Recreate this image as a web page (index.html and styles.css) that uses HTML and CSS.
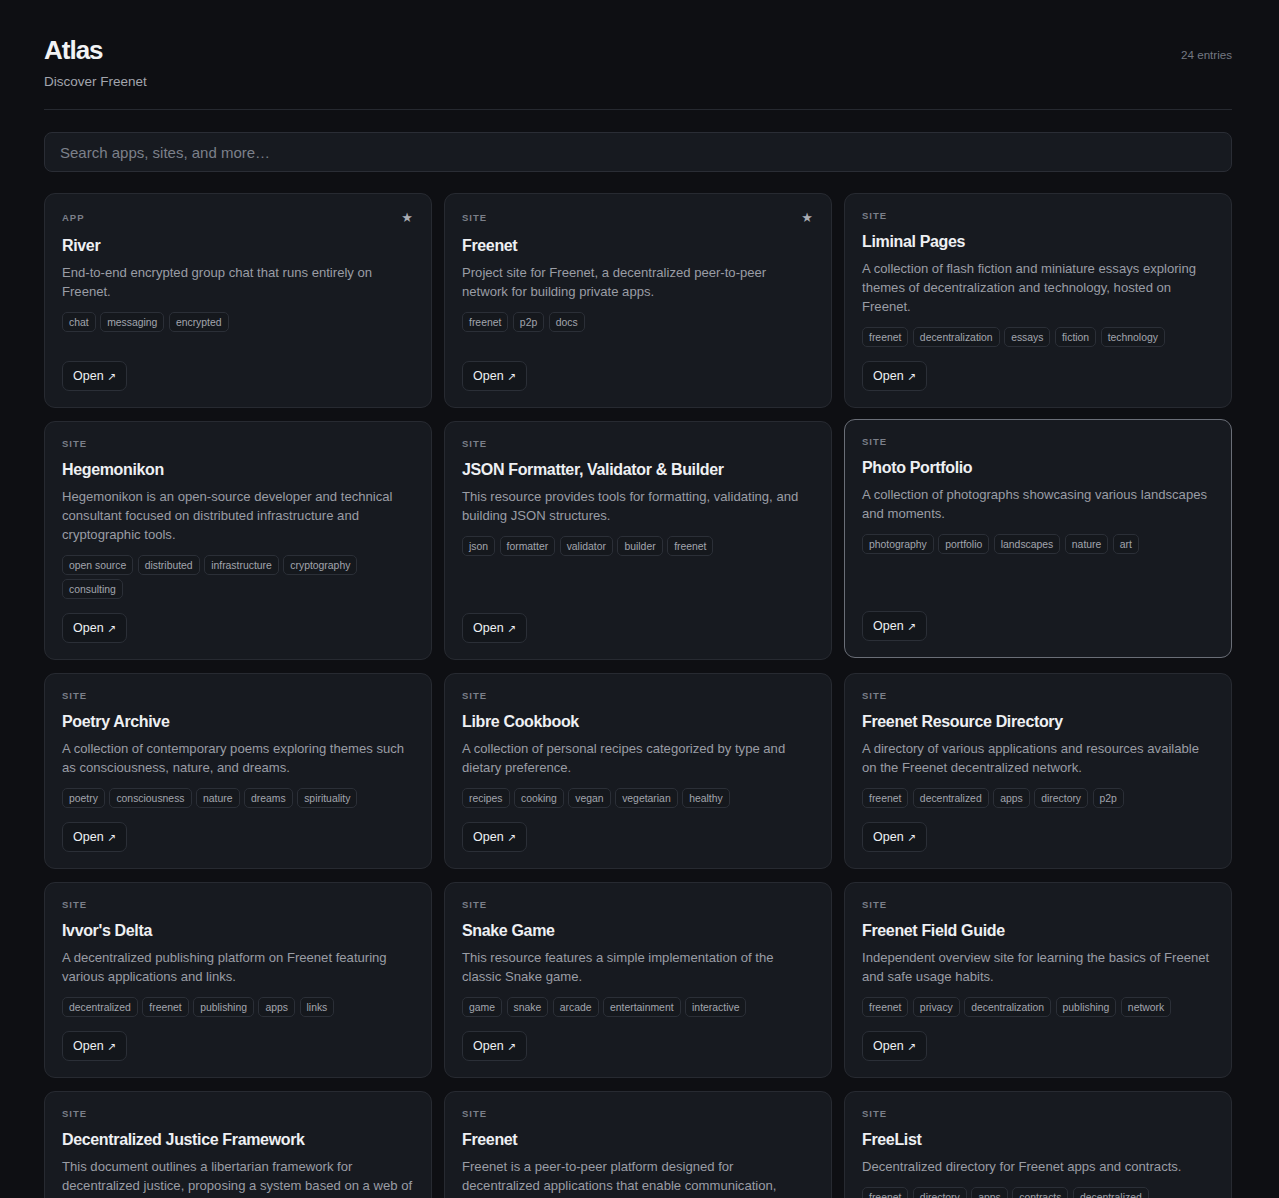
FILE: index.html
```html
<!DOCTYPE html>
<html lang="en">
<head>
<meta charset="utf-8">
<title>Atlas — Discover Freenet</title>
<link rel="stylesheet" href="styles.css">
</head>
<body>
<div class="page">
  <header class="header">
    <div class="brand">
      <h1 class="title">Atlas</h1>
      <p class="subtitle">Discover Freenet</p>
    </div>
    <div class="count">24 entries</div>
  </header>
  <div class="search">
    <input class="search-input" type="text" placeholder="Search apps, sites, and more…">
  </div>
  <main class="grid">
    <article class="card">
      <div class="card-head"><span class="kind">APP</span><span class="star">★</span></div>
      <h2 class="card-title">River</h2>
      <p class="desc">End-to-end encrypted group chat that runs entirely on Freenet.</p>
      <div class="tags"><span class="tag">chat</span><span class="tag">messaging</span><span class="tag">encrypted</span></div>
      <a class="open" href="#">Open <span class="arrow">↗</span></a>
    </article>
    <article class="card">
      <div class="card-head"><span class="kind">SITE</span><span class="star">★</span></div>
      <h2 class="card-title">Freenet</h2>
      <p class="desc">Project site for Freenet, a decentralized peer-to-peer network for building private apps.</p>
      <div class="tags"><span class="tag">freenet</span><span class="tag">p2p</span><span class="tag">docs</span></div>
      <a class="open" href="#">Open <span class="arrow">↗</span></a>
    </article>
    <article class="card">
      <div class="card-head"><span class="kind">SITE</span></div>
      <h2 class="card-title">Liminal Pages</h2>
      <p class="desc">A collection of flash fiction and miniature essays exploring themes of decentralization and technology, hosted on Freenet.</p>
      <div class="tags"><span class="tag">freenet</span><span class="tag">decentralization</span><span class="tag">essays</span><span class="tag">fiction</span><span class="tag">technology</span></div>
      <a class="open" href="#">Open <span class="arrow">↗</span></a>
    </article>

    <article class="card">
      <div class="card-head"><span class="kind">SITE</span></div>
      <h2 class="card-title">Hegemonikon</h2>
      <p class="desc">Hegemonikon is an open-source developer and technical consultant focused on distributed infrastructure and cryptographic tools.</p>
      <div class="tags"><span class="tag">open source</span><span class="tag">distributed</span><span class="tag">infrastructure</span><span class="tag">cryptography</span><span class="tag">consulting</span></div>
      <a class="open" href="#">Open <span class="arrow">↗</span></a>
    </article>
    <article class="card">
      <div class="card-head"><span class="kind">SITE</span></div>
      <h2 class="card-title">JSON Formatter, Validator &amp; Builder</h2>
      <p class="desc">This resource provides tools for formatting, validating, and building JSON structures.</p>
      <div class="tags"><span class="tag">json</span><span class="tag">formatter</span><span class="tag">validator</span><span class="tag">builder</span><span class="tag">freenet</span></div>
      <a class="open" href="#">Open <span class="arrow">↗</span></a>
    </article>
    <article class="card card-hover">
      <div class="card-head"><span class="kind">SITE</span></div>
      <h2 class="card-title">Photo Portfolio</h2>
      <p class="desc">A collection of photographs showcasing various landscapes and moments.</p>
      <div class="tags"><span class="tag">photography</span><span class="tag">portfolio</span><span class="tag">landscapes</span><span class="tag">nature</span><span class="tag">art</span></div>
      <a class="open" href="#">Open <span class="arrow">↗</span></a>
    </article>

    <article class="card">
      <div class="card-head"><span class="kind">SITE</span></div>
      <h2 class="card-title">Poetry Archive</h2>
      <p class="desc">A collection of contemporary poems exploring themes such as consciousness, nature, and dreams.</p>
      <div class="tags"><span class="tag">poetry</span><span class="tag">consciousness</span><span class="tag">nature</span><span class="tag">dreams</span><span class="tag">spirituality</span></div>
      <a class="open" href="#">Open <span class="arrow">↗</span></a>
    </article>
    <article class="card">
      <div class="card-head"><span class="kind">SITE</span></div>
      <h2 class="card-title">Libre Cookbook</h2>
      <p class="desc">A collection of personal recipes categorized by type and dietary preference.</p>
      <div class="tags"><span class="tag">recipes</span><span class="tag">cooking</span><span class="tag">vegan</span><span class="tag">vegetarian</span><span class="tag">healthy</span></div>
      <a class="open" href="#">Open <span class="arrow">↗</span></a>
    </article>
    <article class="card">
      <div class="card-head"><span class="kind">SITE</span></div>
      <h2 class="card-title">Freenet Resource Directory</h2>
      <p class="desc">A directory of various applications and resources available on the Freenet decentralized network.</p>
      <div class="tags"><span class="tag">freenet</span><span class="tag">decentralized</span><span class="tag">apps</span><span class="tag">directory</span><span class="tag">p2p</span></div>
      <a class="open" href="#">Open <span class="arrow">↗</span></a>
    </article>

    <article class="card">
      <div class="card-head"><span class="kind">SITE</span></div>
      <h2 class="card-title">Ivvor's Delta</h2>
      <p class="desc">A decentralized publishing platform on Freenet featuring various applications and links.</p>
      <div class="tags"><span class="tag">decentralized</span><span class="tag">freenet</span><span class="tag">publishing</span><span class="tag">apps</span><span class="tag">links</span></div>
      <a class="open" href="#">Open <span class="arrow">↗</span></a>
    </article>
    <article class="card">
      <div class="card-head"><span class="kind">SITE</span></div>
      <h2 class="card-title">Snake Game</h2>
      <p class="desc">This resource features a simple implementation of the classic Snake game.</p>
      <div class="tags"><span class="tag">game</span><span class="tag">snake</span><span class="tag">arcade</span><span class="tag">entertainment</span><span class="tag">interactive</span></div>
      <a class="open" href="#">Open <span class="arrow">↗</span></a>
    </article>
    <article class="card">
      <div class="card-head"><span class="kind">SITE</span></div>
      <h2 class="card-title">Freenet Field Guide</h2>
      <p class="desc">Independent overview site for learning the basics of Freenet and safe usage habits.</p>
      <div class="tags"><span class="tag">freenet</span><span class="tag">privacy</span><span class="tag">decentralization</span><span class="tag">publishing</span><span class="tag">network</span></div>
      <a class="open" href="#">Open <span class="arrow">↗</span></a>
    </article>

    <article class="card">
      <div class="card-head"><span class="kind">SITE</span></div>
      <h2 class="card-title">Decentralized Justice Framework</h2>
      <p class="desc">This document outlines a libertarian framework for decentralized justice, proposing a system based on a web of trust and voluntary arbitration.</p>
      <div class="tags"><span class="tag">justice</span><span class="tag">libertarian</span><span class="tag">decentralized</span><span class="tag">trust</span></div>
      <a class="open" href="#">Open <span class="arrow">↗</span></a>
    </article>
    <article class="card">
      <div class="card-head"><span class="kind">SITE</span></div>
      <h2 class="card-title">Freenet</h2>
      <p class="desc">Freenet is a peer-to-peer platform designed for decentralized applications that enable communication, collaboration, and data sharing.</p>
      <div class="tags"><span class="tag">freenet</span><span class="tag">p2p</span><span class="tag">platform</span></div>
      <a class="open" href="#">Open <span class="arrow">↗</span></a>
    </article>
    <article class="card">
      <div class="card-head"><span class="kind">SITE</span></div>
      <h2 class="card-title">FreeList</h2>
      <p class="desc">Decentralized directory for Freenet apps and contracts.</p>
      <div class="tags"><span class="tag">freenet</span><span class="tag">directory</span><span class="tag">apps</span><span class="tag">contracts</span><span class="tag">decentralized</span></div>
      <a class="open" href="#">Open <span class="arrow">↗</span></a>
    </article>
  </main>
</div>
</body>
</html>
```

FILE: styles.css
```css
* { box-sizing: border-box; }

html, body {
  margin: 0;
  padding: 0;
  background: #0e0f13;
}

body {
  font-family: "Liberation Sans", Arial, sans-serif;
  color: #e8e9ec;
}

.page {
  width: 1188px;
  margin-left: 44px;
  padding-top: 34px;
  padding-bottom: 40px;
}

.header {
  display: flex;
  justify-content: space-between;
  align-items: flex-start;
  padding-bottom: 18px;
  border-bottom: 1px solid #262930;
}

.title {
  margin: 0;
  font-size: 26px;
  line-height: 32px;
  font-weight: 700;
  letter-spacing: -1px;
  color: #f2f3f5;
}

.subtitle {
  margin: 7px 0 0;
  font-size: 13.5px;
  line-height: 18px;
  color: #a2a5ad;
}

.count {
  margin-top: 14px;
  font-size: 11.6px;
  line-height: 14px;
  color: #747882;
}

.search {
  margin-top: 22px;
  margin-bottom: 21px;
}

.search-input {
  display: block;
  width: 100%;
  height: 40px;
  padding: 0 15px;
  background: #171a20;
  border: 1px solid #2a2d35;
  border-radius: 8px;
  font-family: "Liberation Sans", Arial, sans-serif;
  font-size: 15px;
  color: #e8e9ec;
  outline: none;
}

.search-input::placeholder {
  color: #7c808a;
}

.grid {
  display: grid;
  grid-template-columns: repeat(3, 1fr);
  gap: 13px 12px;
}

.card {
  display: flex;
  flex-direction: column;
  align-items: flex-start;
  padding: 16px 17px;
  background: #171a20;
  border: 1px solid #272a31;
  border-radius: 11px;
}

.card-hover {
  border-color: #6a6e77;
  transform: translateY(-2px);
}

.card-head {
  align-self: stretch;
  display: flex;
  justify-content: space-between;
  align-items: center;
}

.kind {
  font-size: 9.5px;
  line-height: 12px;
  font-weight: 700;
  letter-spacing: 1px;
  color: #7b7f89;
}

.star {
  font-family: "DejaVu Sans", sans-serif;
  font-size: 13px;
  line-height: 16px;
  color: #a9acb3;
  margin-right: 1px;
}

.card-title {
  margin: 9px 0 0;
  font-size: 16px;
  line-height: 22px;
  font-weight: 700;
  letter-spacing: -0.35px;
  color: #eef0f3;
}

.desc {
  margin: 6px 0 0;
  font-size: 13.1px;
  line-height: 19px;
  color: #9a9da5;
}

.tags {
  display: flex;
  flex-wrap: wrap;
  gap: 4px 4.5px;
  margin-top: 11px;
  margin-bottom: 14px;
}

.tag {
  display: inline-flex;
  align-items: center;
  height: 20px;
  padding: 0 6px;
  font-size: 10.4px;
  color: #a2a5ad;
  border: 1px solid #2b2f37;
  border-radius: 5px;
  background: #15181d;
}

.open {
  display: inline-flex;
  align-items: center;
  margin-top: auto;
  height: 30px;
  padding: 0 10px;
  font-size: 12.5px;
  color: #eef0f3;
  text-decoration: none;
  border: 1px solid #2b2f37;
  border-radius: 7px;
  background: #13161b;
}

.arrow {
  margin-left: 4px;
  font-family: "DejaVu Sans", sans-serif;
  font-size: 10.5px;
  line-height: 1;
}
```
